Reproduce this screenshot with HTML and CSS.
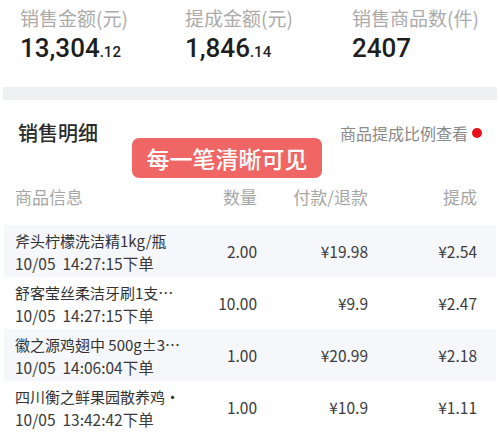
FILE: index.html
```html
<!DOCTYPE html>
<html lang="zh-CN">
<head>
<meta charset="utf-8">
<link rel="stylesheet" href="styles.css">
</head>
<body>
<div class="page">
  <section class="stats">
    <div class="stat">
      <div class="stat-label">销售金额(元)</div>
      <div class="stat-value">13,304<span class="dec">.12</span></div>
    </div>
    <div class="stat">
      <div class="stat-label">提成金额(元)</div>
      <div class="stat-value">1,846<span class="dec">.14</span></div>
    </div>
    <div class="stat">
      <div class="stat-label">销售商品数(件)</div>
      <div class="stat-value">2407</div>
    </div>
  </section>
  <div class="band"></div>
  <section class="card">
    <div class="card-head">
      <h2 class="card-title">销售明细</h2>
      <a class="ratio-link">商品提成比例查看<span class="dot"></span></a>
    </div>
    <div class="badge">每一笔清晰可见</div>
    <div class="grid head-row">
      <span class="c-name">商品信息</span>
      <span class="c-num">数量</span>
      <span class="c-num">付款/退款</span>
      <span class="c-num">提成</span>
    </div>
    <div class="grid row shaded">
      <div class="c-name"><div class="name">斧头柠檬洗洁精1kg/瓶</div><div class="date">10/05&nbsp; 14:27:15下单</div></div>
      <span class="c-num">2.00</span>
      <span class="c-num">¥19.98</span>
      <span class="c-num">¥2.54</span>
    </div>
    <div class="grid row">
      <div class="c-name"><div class="name">舒客莹丝柔洁牙刷1支…</div><div class="date">10/05&nbsp; 14:27:15下单</div></div>
      <span class="c-num">10.00</span>
      <span class="c-num">¥9.9</span>
      <span class="c-num">¥2.47</span>
    </div>
    <div class="grid row shaded">
      <div class="c-name"><div class="name">徽之源鸡翅中 500g±3…</div><div class="date">10/05&nbsp; 14:06:04下单</div></div>
      <span class="c-num">1.00</span>
      <span class="c-num">¥20.99</span>
      <span class="c-num">¥2.18</span>
    </div>
    <div class="grid row">
      <div class="c-name"><div class="name">四川衡之鲜果园散养鸡·</div><div class="date">10/05&nbsp; 13:42:42下单</div></div>
      <span class="c-num">1.00</span>
      <span class="c-num">¥10.9</span>
      <span class="c-num">¥1.11</span>
    </div>
  </section>
</div>
</body>
</html>
```
FILE: styles.css
```css
* { box-sizing: border-box; }
html, body {
  margin: 0;
  padding: 0;
  background: #ffffff;
  overflow: hidden;
}
body {
  font-family: "Noto Sans CJK SC", "Noto Sans", sans-serif;
  color: #333;
}
.page {
  width: 500px;
  padding: 0 3px;
}
.stats {
  display: grid;
  grid-template-columns: 165px 167px 1fr;
  height: 87px;
  padding: 6px 0 0 17px;
}
.stat-label {
  font-size: 19px;
  line-height: 24px;
  color: #ababab;
  white-space: nowrap;
}
.stat-value {
  margin-top: 3px;
  font-family: Roboto, "Liberation Sans", sans-serif;
  font-weight: 500;
  font-size: 26px;
  line-height: 30px;
  color: #1e1e1e;
}
.stat-value .dec {
  font-size: 15px;
}
.band {
  height: 13px;
  background: #eef0f4;
}
.card {
  position: relative;
}
.card-head {
  display: flex;
  justify-content: space-between;
  align-items: center;
  padding: 21px 15px 0 15px;
}
.card-title {
  margin: 0;
  font-size: 20px;
  line-height: 24px;
  font-weight: 500;
  color: #2b2b2b;
}
.ratio-link {
  display: flex;
  align-items: center;
  font-size: 16px;
  line-height: 24px;
  color: #8a8a8a;
}
.dot {
  width: 10px;
  height: 10px;
  border-radius: 50%;
  background: #e8121c;
  margin-left: 4px;
}
.badge {
  position: absolute;
  left: 129px;
  top: 38px;
  width: 190px;
  height: 40px;
  border-radius: 7px;
  background: #f06665;
  color: #fff;
  font-size: 23px;
  font-weight: 500;
  line-height: 40px;
  text-align: center;
}
.grid {
  display: grid;
  grid-template-columns: 196px 46px 111px 109px;
  padding: 0 21px 0 11px;
  margin: 0 1px;
}
.head-row {
  margin-top: 40px;
  margin-bottom: 16px;
  font-size: 17px;
  line-height: 24px;
  color: #a6a6a6;
}
.c-num {
  text-align: right;
  white-space: nowrap;
}
.row {
  height: 52px;
  align-items: center;
  font-size: 15.5px;
  color: #3c3c3c;
}
.row.shaded {
  background: #f6f7fb;
}
.row .c-name {
  align-self: start;
  padding-top: 4px;
  white-space: nowrap;
}
.name, .date {
  line-height: 23px;
}
.name {
  font-size: 15px;
  color: #333;
}
.date {
  color: #3a3a3a;
}
```
